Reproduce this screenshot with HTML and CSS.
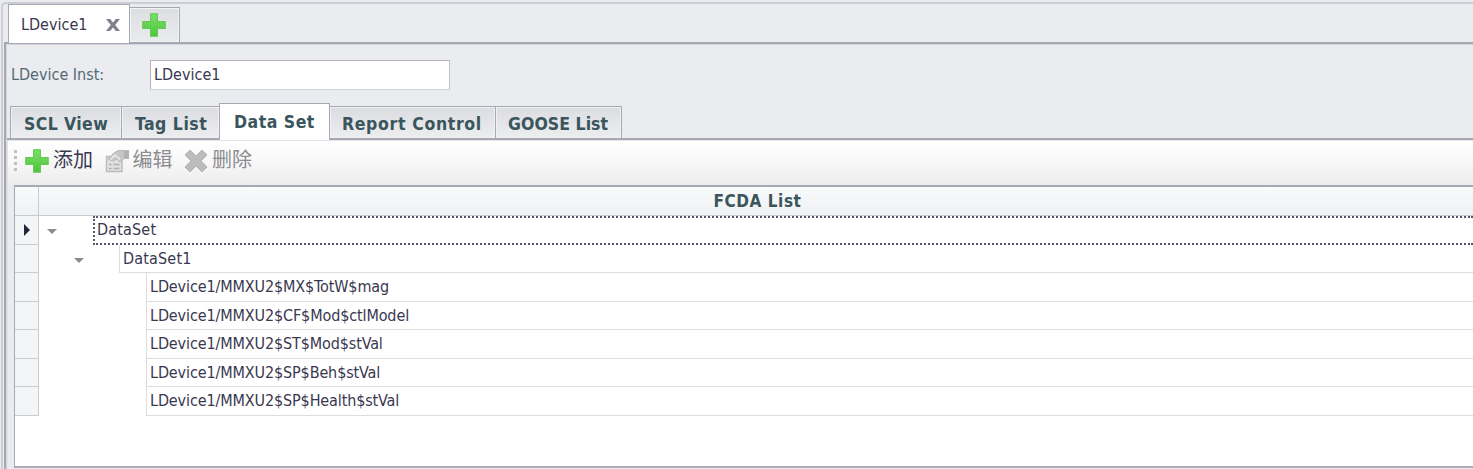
FILE: index.html
```
<!DOCTYPE html>
<html lang="zh">
<head>
<meta charset="utf-8">
<title>LDevice1</title>
<link rel="stylesheet" href="styles.css">
</head>
<body>
<svg width="0" height="0" class="defs">
  <defs>
    <linearGradient id="green" x1="0" y1="0" x2="0" y2="1"><stop offset="0" stop-color="#7be06a"/><stop offset="1" stop-color="#4dc43c"/></linearGradient>
    <symbol id="plus" viewBox="0 0 24 24"><path d="M8.6.8h6.8v7.8h7.8v6.8h-7.8v7.8H8.6v-7.8H.8V8.6h7.8z" fill="url(#green)" stroke="#62cb50" stroke-width="1.2" stroke-linejoin="round"/></symbol>
  </defs>
</svg>
<div class="window">
  <div class="doc-tabs">
    <div class="doc-tab active"><span class="doc-name">LDevice1</span>
      <svg class="close" viewBox="0 0 14 12"><path d="M0 0h4.2L7 3.4 9.800 0H14L9.200 6l4.800 6H9.800L7 8.600 4.200 12H0l4.800-6z" fill="#7e828d"/></svg>
    </div>
    <div class="doc-tab add"><svg class="icon"><use href="#plus"/></svg></div>
  </div>
  <div class="panel">
    <div class="field"><label class="label">LDevice Inst:</label><div class="input">LDevice1</div></div>
    <div class="tabs">
      <div class="tab t1"><span>SCL View</span></div>
      <div class="tab t2"><span>Tag List</span></div>
      <div class="tab t3 selected"><span>Data Set</span></div>
      <div class="tab t4"><span>Report Control</span></div>
      <div class="tab t5"><span>GOOSE List</span></div>
    </div>
    <div class="page">
      <div class="toolbar">
        <span class="grip"><i></i><i></i><i></i><i></i></span>
        <div class="tool"><svg class="icon"><use href="#plus"/></svg><span>添加</span></div>
        <div class="tool disabled"><svg class="icon" viewBox="0 0 24 24"><path d="M1.500 7.500h15.500v15H1.500z" fill="#e0e0e0" stroke="#bcbcbc" stroke-width="1.500"/><path d="M4 15.500h2.500m2 0h6M4 19.500h2.500m2 0h6" stroke="#b0b0b0" stroke-width="1.600"/><path d="M3 10l6-6 4-2.500h11v8h-5l-4 3.500-3-3-4 2z" fill="#c6c6c6" stroke="#b8b8b8"/><path d="M5.500 10.500l4.500-4.500 5 4.500" fill="none" stroke="#ececec" stroke-width="1.500"/><path d="M19 2h5v7h-5z" fill="#b2b2b2"/></svg><span>编辑</span></div>
        <div class="tool disabled"><svg class="icon" viewBox="0 0 24 24"><path d="M6 1l6 6 6-6 5 5-6 6 6 6-5 5-6-6-6 6-5-5 6-6-6-6z" fill="#bcbcbc" stroke="#b2b2b2" stroke-linejoin="round"/></svg><span>删除</span></div>
      </div>
      <div class="grid">
        <div class="row head"><div class="ind"></div><div class="title"><span>FCDA List</span></div></div>
        <div class="row"><div class="ind"><i class="current"></i></div><div class="tree l0"><i class="arrow"></i></div><div class="cell focus group"><span>DataSet</span></div></div>
        <div class="row"><div class="ind"></div><div class="tree l1"><i class="arrow"></i></div><div class="cell group"><span>DataSet1</span></div></div>
        <div class="row"><div class="ind"></div><div class="tree l2"></div><div class="cell"><span>LDevice1/MMXU2$MX$TotW$mag</span></div></div>
        <div class="row"><div class="ind"></div><div class="tree l2"></div><div class="cell"><span>LDevice1/MMXU2$CF$Mod$ctlModel</span></div></div>
        <div class="row"><div class="ind"></div><div class="tree l2"></div><div class="cell"><span>LDevice1/MMXU2$ST$Mod$stVal</span></div></div>
        <div class="row"><div class="ind"></div><div class="tree l2"></div><div class="cell"><span>LDevice1/MMXU2$SP$Beh$stVal</span></div></div>
        <div class="row"><div class="ind"></div><div class="tree l2"></div><div class="cell"><span>LDevice1/MMXU2$SP$Health$stVal</span></div></div>
      </div>
    </div>
  </div>
</div>
</body>
</html>
```
FILE: styles.css
```
* { box-sizing: border-box; }
body { margin: 0; width: 1473px; height: 469px; overflow: hidden; background: #ebecef; color: #3a3850; font: 16px/20px "DejaVu Sans Condensed", "DejaVu Sans", "Noto Sans CJK SC", sans-serif; font-stretch: condensed; white-space: nowrap; }
.defs { position: absolute; }
.window { margin: 2px 0 0 1px; height: 480px; border: 2px solid #cdced5; border-right: 0; border-radius: 5px 0 0; padding: 1px 0 0 2px; }
.doc-tabs { display: flex; align-items: flex-end; height: 37px; margin-left: 3px; }
.doc-tab { display: flex; align-items: center; border: 1px solid #a7a8b3; border-bottom: 0; }
.doc-tab.active { position: relative; width: 122px; height: 39px; margin-bottom: -1px; padding: 1px 0 0 12px; background: #fff; }
.doc-name { width: 85px; }
.close { width: 14px; height: 12px; }
.doc-tab.add { width: 51px; height: 35px; margin-left: -1px; padding: 0 0 0 12px; background: linear-gradient(#dddee2, #eaebed); box-shadow: inset 0 0 0 1px #f2f3f5; }
.icon { width: 24px; height: 24px; flex: none; }
.panel { border: solid #a7a8b3; border-width: 2px 0 0 2px; box-shadow: inset 1px 1px #d5d6dc; height: 440px; margin-left: -1px; padding: 16px 0 0 1px; }
.field { display: flex; height: 30px; margin-left: 3px; }
.label { width: 139px; margin-left: 1px; padding-top: 5px; color: #536976; }
.input { width: 300px; height: 30px; border: 1px solid #b4b5bf; border-bottom-color: #d1d2d8; border-right-color: #bfc0c8; background: #fff; padding: 4px 3px; }
.tabs { display: flex; align-items: flex-end; height: 35px; margin: 13px 0 0 3px; }
.tab { height: 32px; margin-right: -1px; padding: 7px 0 0 13px; border: 1px solid #a7a8b3; border-bottom: 0; background: linear-gradient(#dcdde1, #ecedef); box-shadow: inset 0 0 0 1px #f0f1f3; color: #3a555c; font-size: 17.500px; font-weight: bold; letter-spacing: .5px; }
.tab.selected { position: relative; height: 37px; margin-bottom: -2px; padding: 8px 0 0 14px; background: #fff; box-shadow: none; }
.t1 { width: 112px; letter-spacing: .4px; } .t2 { width: 99px; } .t3 { width: 111px; } .t4 { width: 167px; padding-left: 12px; letter-spacing: .65px; } .t5 { width: 127px; padding-left: 12px; letter-spacing: .05px; }
.page { border-top: 2px solid #a7a8b3; box-shadow: inset 1px 1px #e3e4e8; height: 340px; padding: 1px 0 0 1px; }
.toolbar { display: flex; align-items: center; height: 44px; padding: 0 0 5px 6px; background: linear-gradient(#fff, #f8f8f9 45%, #ececee); font-size: 20px; }
.toolbar .tool span { margin-top: -3px; }
.grip { display: flex; flex-direction: column; gap: 3px; width: 11px; }
.grip i { width: 3px; height: 3px; background: #bfbfc4; }
.tool { display: flex; align-items: center; width: 79.500px; gap: 4px; font-family: "Noto Sans CJK SC", sans-serif; }
.tool.disabled { color: #8c8c8e; }
.grid { border: 2px solid #a8a9b3; border-right: 0; border-bottom-color: #abacb6; border-left-width: 1px; background: #fff; height: 283px; margin-left: 6px; }
.row { display: flex; height: 28.500px; }
.ind { display: flex; align-items: center; width: 24px; flex: none; border: solid #c9cad2; border-width: 0 1px 1px 0; background: #f4f5f7; }
.row.head { height: 29px; background: linear-gradient(#f9fafb, #f0f1f3); }
.head .ind { background: none; }
.title { flex: 1; padding: 4px 0 0 3px; text-align: center; border-bottom: 1px solid #c9cad2; font-weight: bold; font-size: 17px; color: #3a555c; letter-spacing: .55px; }
.current { margin-left: 9px; border: solid transparent; border-width: 6px 0 6px 6px; border-left-color: #26243a; }
.tree { display: flex; justify-content: flex-end; align-items: center; flex: none; }
.l0 { width: 54px; padding-right: 36px; } .l1 { width: 80px; padding-right: 35px; } .l2 { width: 107px; }
.arrow { margin-top: 3px; border: solid transparent; border-width: 5px 5px 0; border-top-color: #8a8b94; }
.cell { flex: 1; padding: 4px 0 0 3px; border: solid #dcdde3; border-width: 0 0 1px 1px; letter-spacing: -.12px; }
.cell.focus { padding: 2px 0 0 2px; border: 2px dotted #56566a; border-right: 0; }
.cell.group { letter-spacing: .17px; }
```
